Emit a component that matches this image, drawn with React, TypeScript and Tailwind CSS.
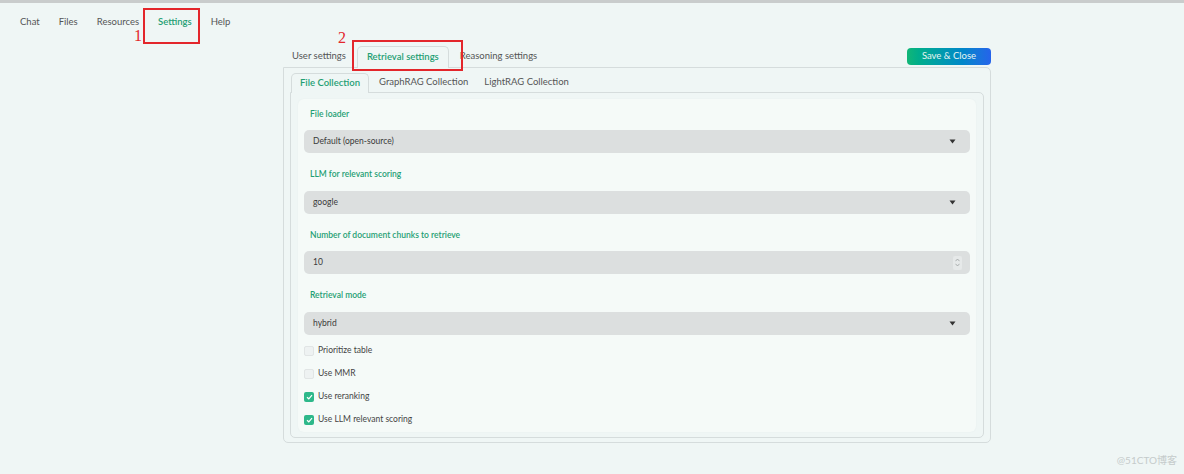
import React from 'react';

const font = { fontFamily: 'Lato, "Noto Sans", "Noto Sans CJK SC", sans-serif' };

const Caret = () => (
  <svg width="7" height="5" viewBox="0 0 7 5" className="mr-[14px]">
    <path d="M0.5 0.5 L6.5 0.5 L3.5 4.5 Z" fill="#333" />
  </svg>
);

const Spinner = () => (
  <div className="mr-[8px] flex h-[14px] w-[9px] flex-col items-center justify-center gap-[1px] rounded-[2px] bg-[#e6e9e9]">
    <svg width="5" height="4" viewBox="0 0 5 4">
      <path d="M0.5 3.2 L2.5 1 L4.5 3.2" stroke="#9aa0a0" strokeWidth="0.8" fill="none" />
    </svg>
    <svg width="5" height="4" viewBox="0 0 5 4">
      <path d="M0.5 0.8 L2.5 3 L4.5 0.8" stroke="#9aa0a0" strokeWidth="0.8" fill="none" />
    </svg>
  </div>
);

const Field = ({ label, value, kind }: { label: string; value: string; kind: 'select' | 'number' }) => (
  <div className="mb-[14.5px] flex flex-col">
    <div className="flex h-[14px] items-center pl-[12px] text-[8.5px] font-semibold text-[#1f9f74]">{label}</div>
    <div className="mt-[9px] ml-[6px] mr-[6px] flex h-[23px] items-center justify-between rounded-[5px] bg-[#dcdfdf]">
      <span className="pl-[9px] text-[8.5px] text-[#3a3a3a]">{value}</span>
      {kind === 'select' ? <Caret /> : <Spinner />}
    </div>
  </div>
);

const Check = ({ label, checked }: { label: string; checked: boolean }) => (
  <div className="ml-[6px] flex h-[23px] items-center gap-[4px]">
    {checked ? (
      <div className="flex h-[10px] w-[10px] items-center justify-center rounded-[2px] bg-[#2db88a]">
        <svg width="7" height="6" viewBox="0 0 7 6">
          <path d="M1 3.2 L2.8 4.8 L6 1.2" stroke="#fff" strokeWidth="1.2" fill="none" />
        </svg>
      </div>
    ) : (
      <div className="h-[10px] w-[10px] rounded-[2px] border border-[#e1e5e5] bg-[#eef2f2]" />
    )}
    <span className="text-[8.5px] text-[#444]">{label}</span>
  </div>
);

export default function App() {
  return (
    <div className="relative min-h-[474px] w-[1184px] bg-[#eff6f5]" style={font}>
      <div className="h-[3px] bg-[#c9cccc]" />

      {/* top nav */}
      <div className="relative flex h-[38px] items-center gap-[19px] pl-[20px] text-[9.5px] text-[#555]">
        <span>Chat</span>
        <span>Files</span>
        <span>Resources</span>
        <span className="font-semibold text-[#1f9f74]">Settings</span>
        <span>Help</span>
        {/* annotation 1 */}
        <div className="absolute left-[143px] top-[5px] h-[36px] w-[57px] border-2 border-[#e3262b]" />
        <span className="absolute left-[134px] top-[25px] text-[16px] leading-none text-[#e3262b]" style={{ fontFamily: '"Liberation Serif", serif' }}>
          1
        </span>
      </div>

      {/* settings area */}
      <div className="ml-[283px] w-[708px]">
        <div className="relative flex h-[26px] items-end justify-between">
          <div className="flex items-end text-[9.5px]">
            <div className="flex h-[21px] items-center pl-[9px] pr-[11px] text-[#555]">User settings</div>
            <div className="relative z-10 -mb-px flex h-[22px] items-center rounded-t-[5px] border border-b-0 border-[#d5dcdc] bg-[#eff6f5] px-[9px] font-semibold text-[#1f9f74]">
              Retrieval settings
            </div>
            <div className="flex h-[21px] items-center pl-[11px] text-[#555]">Reasoning settings</div>
          </div>
          <button className="mb-[2px] flex h-[17px] w-[84px] items-center justify-center rounded-[4px] bg-gradient-to-r from-[#12b676] to-[#2563eb] text-[9.5px] text-[#e8f5f1]">
            Save &amp; Close
          </button>
          {/* annotation 2 */}
          <div className="absolute left-[69px] top-[-1px] z-20 h-[31px] w-[111px] border-2 border-[#e3262b]" />
          <span className="absolute left-[55px] top-[-11px] text-[16px] leading-none text-[#e3262b]" style={{ fontFamily: '"Liberation Serif", serif' }}>
            2
          </span>
        </div>

        <div className="rounded-b-[5px] rounded-tr-[5px] border border-[#d5dcdc] px-[6px] pb-[4px] pt-[5px]">
          <div className="flex items-end text-[9.5px]">
            <div className="relative z-10 -mb-px ml-[1px] flex h-[20px] items-center rounded-t-[5px] border border-b-0 border-[#d5dcdc] bg-[#eff6f5] px-[8px] font-semibold text-[#1f9f74]">
              File Collection
            </div>
            <div className="flex h-[19px] items-center pl-[10px] text-[#555]">GraphRAG Collection</div>
            <div className="flex h-[19px] items-center pl-[16px] text-[#555]">LightRAG Collection</div>
          </div>
          <div className="rounded-b-[5px] rounded-tr-[5px] border border-[#d5dcdc] px-[7px] pb-[5px] pt-[6px]">
            <div className="rounded-[6px] bg-[#f5faf8] pb-[1px] pt-[8px] shadow-[0_0_2px_rgba(0,0,0,0.04)]">
              <Field label="File loader" value="Default (open-source)" kind="select" />
              <Field label="LLM for relevant scoring" value="google" kind="select" />
              <Field label="Number of document chunks to retrieve" value="10" kind="number" />
              <Field label="Retrieval mode" value="hybrid" kind="select" />
              <div className="-mt-[10px]">
                <Check label="Prioritize table" checked={false} />
                <Check label="Use MMR" checked={false} />
                <Check label="Use reranking" checked />
                <Check label="Use LLM relevant scoring" checked />
              </div>
            </div>
          </div>
        </div>
      </div>

      <div className="absolute bottom-[6px] right-[7px] text-[10px] text-[#c5cbcb]">@51CTO博客</div>
    </div>
  );
}
